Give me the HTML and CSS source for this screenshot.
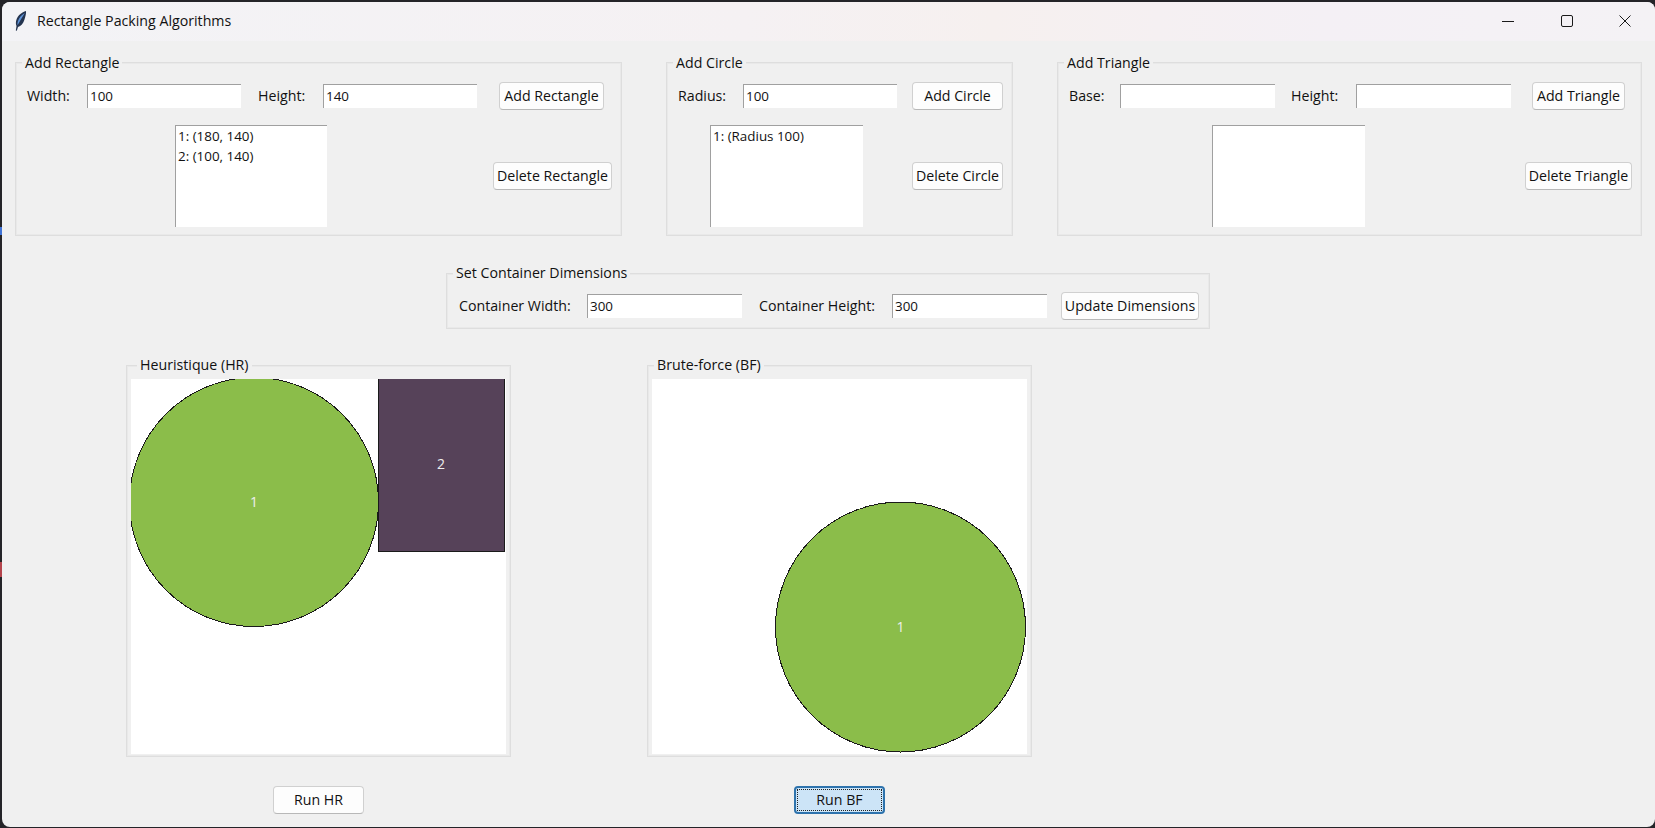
FILE: index.html
```html
<!DOCTYPE html>
<html lang="en">
<head>
<meta charset="utf-8">
<title>Rectangle Packing Algorithms</title>
<link rel="stylesheet" href="styles.css">
</head>
<body>
<div class="window">
  <header class="titlebar">
    <svg class="feather" width="12" height="20" viewBox="0 0 12 20"><path d="M11 0C7 1 2.500 4.500 1.200 9.500.7 11.500.8 13.500 1.500 15L.8 19.500l1 .3L3 16c3-.7 5.300-3.500 6.500-7.500C10.400 5.500 11.300 2.500 11 0z" fill="#24344f"/><path d="M9.800 2C7 3.500 4 6.500 2.800 10.500c-.4 1.500-.4 2.800-.2 3.800C4 12 6 8 9.800 2z" fill="#5f93d8"/></svg>
    <span class="title">Rectangle Packing Algorithms</span>
    <div class="winbtns">
      <svg class="winbtn" viewBox="0 0 12 12"><path d="M0 6.500h12" stroke="#1a1a1a" fill="none"/></svg>
      <svg class="winbtn" viewBox="0 0 12 12"><rect x=".5" y=".5" width="11" height="11" rx="1.500" stroke="#1a1a1a" fill="none"/></svg>
      <svg class="winbtn" viewBox="0 0 12 12"><path d="M.5.5l11 11M11.500.5l-11 11" stroke="#1a1a1a" fill="none"/></svg>
    </div>
  </header>

  <main class="content">
    <div class="row-top">
      <section class="group g-rect">
        <span class="group-title">Add Rectangle</span>
        <div class="line">
          <label class="lbl l-width">Width:</label><div class="entry">100</div>
          <label class="lbl l-height">Height:</label><div class="entry">140</div>
          <button class="btn b-addrect">Add Rectangle</button>
        </div>
        <div class="line2">
          <div class="listbox"><div>1: (180, 140)</div><div>2: (100, 140)</div></div>
          <button class="btn b-delrect">Delete Rectangle</button>
        </div>
      </section>

      <section class="group g-circle">
        <span class="group-title">Add Circle</span>
        <div class="line">
          <label class="lbl l-radius">Radius:</label><div class="entry">100</div>
          <button class="btn b-addcircle">Add Circle</button>
        </div>
        <div class="line2">
          <div class="listbox"><div>1: (Radius 100)</div></div>
          <button class="btn b-delcircle">Delete Circle</button>
        </div>
      </section>

      <section class="group g-tri">
        <span class="group-title">Add Triangle</span>
        <div class="line">
          <label class="lbl l-base">Base:</label><div class="entry"></div>
          <label class="lbl l-theight">Height:</label><div class="entry"></div>
          <button class="btn b-addtri">Add Triangle</button>
        </div>
        <div class="line2">
          <div class="listbox"></div>
          <button class="btn b-deltri">Delete Triangle</button>
        </div>
      </section>
    </div>

    <section class="group g-dims">
      <span class="group-title">Set Container Dimensions</span>
      <div class="line">
        <label class="lbl l-cw">Container Width:</label><div class="entry">300</div>
        <label class="lbl l-ch">Container Height:</label><div class="entry">300</div>
        <button class="btn b-update">Update Dimensions</button>
      </div>
    </section>

    <div class="row-canvas">
      <div class="col col-hr">
        <section class="group g-canvas">
          <span class="group-title title-hr">Heuristique (HR)</span>
          <svg class="canvas" width="375" height="375" viewBox="0 0 375 375">
            <circle class="shape" cx="123" cy="123" r="124.500" fill="#8bbd4a" stroke="#1a1a1a"/>
            <rect class="shape" x="247.500" y="-2" width="126" height="174.500" fill="#564259" stroke="#1a1a1a"/>
            <text x="123" y="128" class="shape-label">1</text>
            <text x="310" y="90" class="shape-label">2</text>
          </svg>
        </section>
        <button class="btn b-run">Run HR</button>
      </div>
      <div class="col col-bf">
        <section class="group g-canvas">
          <span class="group-title">Brute-force (BF)</span>
          <svg class="canvas" width="375" height="375" viewBox="0 0 375 375">
            <circle class="shape" cx="248.500" cy="248" r="125" fill="#8bbd4a" stroke="#1a1a1a"/>
            <text x="248.500" y="253" class="shape-label">1</text>
          </svg>
        </section>
        <button class="btn b-run b-focus"><span class="focus-ring">Run BF</span></button>
      </div>
    </div>
  </main>
</div>
</body>
</html>
```
FILE: styles.css
```css
* { box-sizing: border-box; }
html, body { margin: 0; height: 100%; }
body {
  background-color: #242428;
  background-image: linear-gradient(to bottom,
    transparent 227px, #3f73d6 227px, #3f73d6 235px, transparent 235px,
    transparent 562px, #b4444c 562px, #b4444c 577px, transparent 577px);
  background-size: 2px 100%;
  background-repeat: no-repeat;
  overflow: hidden;
  font-family: "Open Sans", "Liberation Sans", sans-serif;
  font-size: 14.2px;
  color: #111;
}
.window {
  width: 1653px;
  height: 825px;
  margin: 2px 0 0 2px;
  background: #f0f0f0;
  border-radius: 8px;
  overflow: hidden;
}
.titlebar {
  height: 39px;
  display: flex;
  align-items: center;
  padding: 0 0 2px 13px;
  background: linear-gradient(90deg, #f3f3f6 0%, #f5f1f3 45%, #f6f0ef 60%, #f4f0f5 80%, #f4f2f5 100%);
}
.feather { display: block; }
.title { margin-left: 10px; color: #111; }
.winbtns { margin-left: auto; display: flex; gap: 46.5px; padding-right: 24px; }
.winbtn { display: block; width: 12px; height: 12px; }

.content { display: block; }
.row-top { display: flex; padding: 21px 0 0 13px; }

.group { position: relative; border: 1px solid #dedede; box-shadow: inset 0 0 0 1px #e9e9e9; }
.group-title {
  position: absolute;
  top: -9px;
  left: 6px;
  padding: 0 3px;
  background: #f0f0f0;
  line-height: 18px;
  white-space: nowrap;
}
.g-canvas .group-title { top: -10px; }
.g-canvas .title-hr { left: 10px; }

.g-rect { width: 607px; height: 174px; }
.g-circle { width: 347px; height: 174px; margin-left: 44px; }
.g-tri { width: 585px; height: 174px; margin-left: 44px; }
.g-dims { width: 764px; height: 56px; margin: 37px 0 0 444px; }
.g-dims .group-title { top: -10px; }

.line { display: flex; align-items: center; height: 28px; margin-top: 19px; padding-left: 11px; }
.line2 { display: flex; align-items: center; margin-top: 15px; }

.lbl { line-height: 18px; white-space: nowrap; }
.entry {
  height: 24px;
  background: #fff;
  border-top: 1px solid #a0a0a0;
  border-left: 1px solid #a0a0a0;
  padding-left: 2px;
  font-size: 13.4px;
  line-height: 22px;
}
.listbox {
  height: 102px;
  background: #fff;
  border-top: 1px solid #a0a0a0;
  border-left: 1px solid #a0a0a0;
  padding: 0 0 0 2px;
  font-size: 13.4px;
  line-height: 20px;
}
.btn {
  height: 28px;
  padding: 0 0 2px;
  border: 1px solid #d0d0d0;
  border-bottom-color: #b8b8b8;
  border-radius: 4px;
  background: #fdfdfd;
  font: inherit;
  color: #111;
  white-space: nowrap;
}

.l-width { width: 60px; }
.g-rect .entry { width: 154px; }
.l-height { width: 82px; padding-left: 17px; }
.b-addrect { width: 105px; margin-left: 22px; }
.g-rect .listbox { width: 152px; margin-left: 159px; }
.b-delrect { width: 119px; margin-left: 166px; }

.l-radius { width: 65px; }
.g-circle .entry { width: 154px; }
.b-addcircle { width: 91px; margin-left: 15px; }
.g-circle .listbox { width: 153px; margin-left: 43px; }
.b-delcircle { width: 91px; margin-left: 49px; }

.g-tri .entry { width: 155px; }
.l-base { width: 51px; }
.l-theight { width: 81px; padding-left: 16px; }
.b-addtri { width: 93px; margin-left: 21px; }
.g-tri .listbox { width: 153px; margin-left: 154px; }
.b-deltri { width: 107px; margin-left: 160px; }

.g-dims .line { margin-top: 18px; padding-left: 12px; }
.l-cw { width: 128px; }
.g-dims .entry { width: 155px; }
.l-ch { width: 150px; padding-left: 17px; }
.b-update { width: 138px; margin-left: 14px; }

.row-canvas { display: flex; padding-top: 36px; }
.col { display: flex; flex-direction: column; }
.col-hr { margin-left: 124px; }
.col-bf { margin-left: 136px; }
.g-canvas { width: 385px; height: 392px; padding: 13px 0 0 4px; }
.canvas { display: block; background: #fff; overflow: hidden; }
.shape { shape-rendering: crispEdges; }
.shape-label { font-size: 14px; fill: #eeeeee; text-anchor: middle; }

.b-run { width: 91px; margin-top: 29px; align-self: flex-start; }
.col-hr .b-run { margin-left: 147px; }
.col-bf .b-run { margin-left: 147px; }
.b-focus { background: #cce4f7; border: 2px solid #2e73ad; padding: 1px; }
.focus-ring { display: flex; align-items: center; justify-content: center; height: 100%; padding-bottom: 2px; border: 1px dotted #222; }
```
